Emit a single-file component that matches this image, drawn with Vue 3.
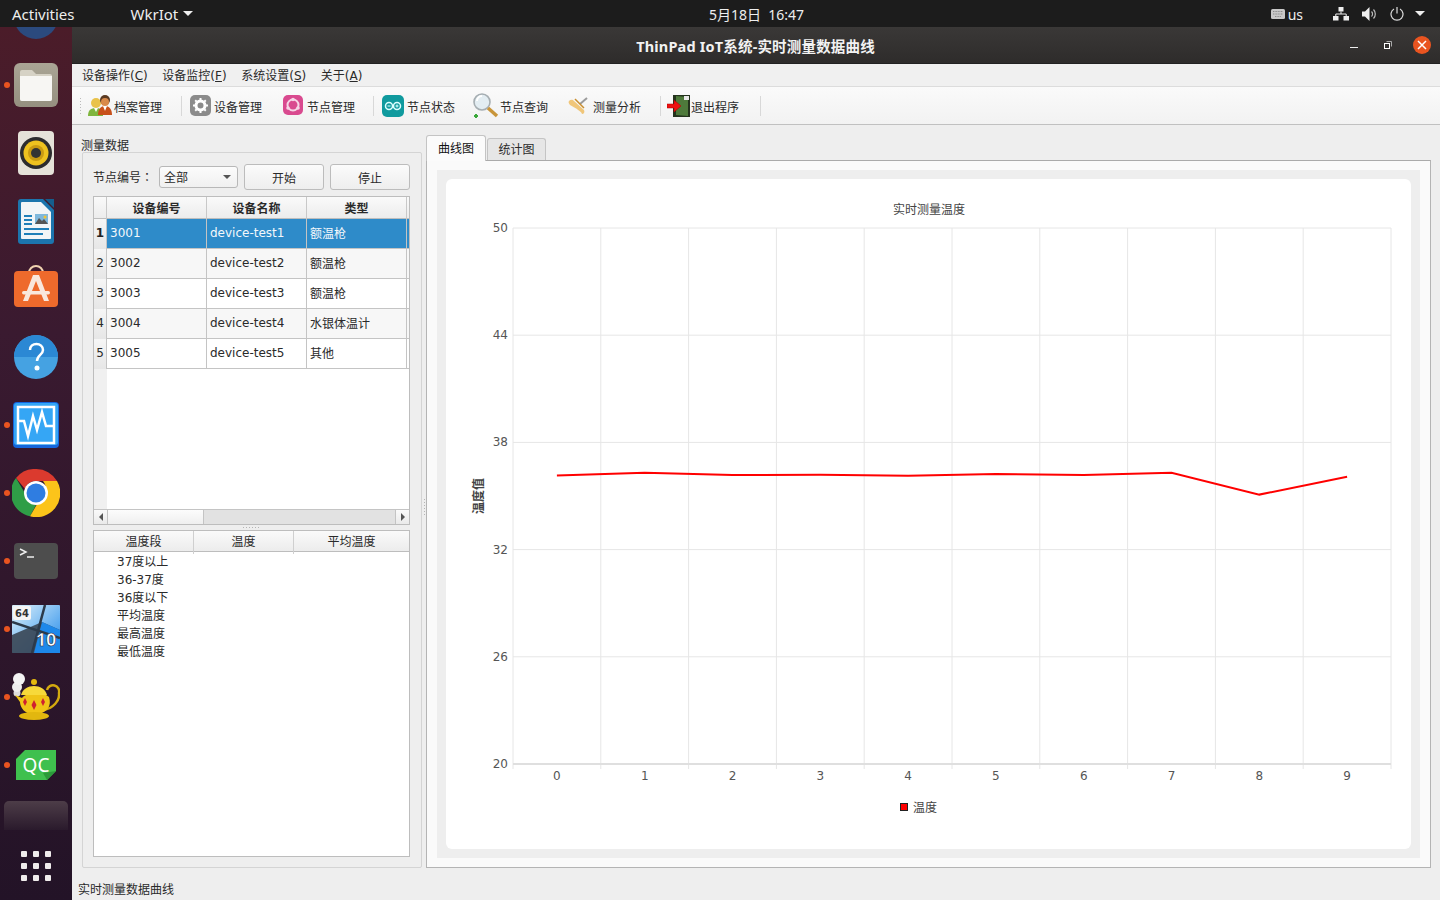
<script setup>
const devices = [
  { id: "3001", name: "device-test1", type: "额温枪" },
  { id: "3002", name: "device-test2", type: "额温枪" },
  { id: "3003", name: "device-test3", type: "额温枪" },
  { id: "3004", name: "device-test4", type: "水银体温计" },
  { id: "3005", name: "device-test5", type: "其他" },
];

const tempRows = ["37度以上", "36-37度", "36度以下", "平均温度", "最高温度", "最低温度"];

const left = 513;
const right = 1391;
const top = 228;
const bottom = 764;
const stepX = (right - left) / 10;
const stepY = (bottom - top) / 5;

const xLines = Array.from({ length: 11 }, (_, i) => left + i * stepX);
const yLines = Array.from({ length: 6 }, (_, i) => top + i * stepY);
const yLabels = ["50", "44", "38", "32", "26", "20"];
const xLabels = Array.from({ length: 10 }, (_, i) => i);

const values = [36.15, 36.3, 36.17, 36.19, 36.13, 36.23, 36.18, 36.3, 35.08, 36.08];
const points = values
  .map((v, i) => {
    const x = left + stepX / 2 + i * stepX;
    const y = bottom - ((v - 20) / 30) * (bottom - top);
    return x.toFixed(1) + "," + y.toFixed(1);
  })
  .join(" ");
</script>

<template>
  <div class="desktop">
    <header class="topbar">
      <span class="activities">Activities</span>
      <span class="app-menu">WkrIot<i class="caret"></i></span>
      <span class="clock">5月18日&nbsp;&nbsp;16:47</span>
      <div class="tray">
        <svg width="14" height="10" viewBox="0 0 14 10">
          <rect width="14" height="10" rx="1.5" fill="#c8c8c8" />
          <path d="M2 2.500h10M2 5h10M4 7.500h6" stroke="#8a8a8a" stroke-width="1" stroke-dasharray="1 .6" />
        </svg>
        <span class="lang">us</span>
        <svg class="net" width="16" height="14" viewBox="0 0 16 14">
          <path d="M5.500 0h5v4.500h-5zM0 9h5.500v4.500H0zM10.500 9H16v4.500h-5.500z" fill="#eee" />
          <path d="M8 4.500v2.500M2.800 9V7h10.400v2" fill="none" stroke="#eee" />
        </svg>
        <svg class="vol" width="15" height="14" viewBox="0 0 15 14">
          <path d="M0 4.500h3L7.500 0v14L3 9.500H0z" fill="#eee" />
          <path d="M9.500 4.500a3.500 3.500 0 0 1 0 5M11.500 2.500a6.500 6.500 0 0 1 0 9" fill="none" stroke="#bbb" stroke-width="1.200" />
        </svg>
        <svg class="pow" width="14" height="14" viewBox="0 0 14 14">
          <path d="M7 0v6.500" stroke="#ddd" stroke-width="1.200" />
          <path d="M4 2A6 6 0 1 0 10 2" fill="none" stroke="#ddd" stroke-width="1.200" />
        </svg>
        <i class="caret tray-caret"></i>
      </div>
    </header>

    <div class="below">
      <aside class="dock">
        <div class="dock-item first">
          <svg width="44" height="44" viewBox="0 0 44 44"><circle cx="22" cy="22" r="22" fill="#2b4a7e" /></svg>
        </div>
        <div class="dock-item running">
          <svg width="44" height="44" viewBox="0 0 44 44">
            <defs>
              <linearGradient id="fileBg" x1="0" y1="0" x2="0" y2="1"><stop offset="0" stop-color="#aaa595" /><stop offset="1" stop-color="#958f7f" /></linearGradient>
            </defs>
            <rect width="44" height="44" rx="6" fill="url(#fileBg)" />
            <path d="M6 9a2 2 0 0 1 2-2h10l4 4h14a2 2 0 0 1 2 2v23a2 2 0 0 1-2 2H8a2 2 0 0 1-2-2z" fill="#d6d2c5" />
            <path d="M6 13h32v23a2 2 0 0 1-2 2H8a2 2 0 0 1-2-2z" fill="#f7f6f3" />
          </svg>
        </div>
        <div class="dock-item">
          <svg width="36" height="44" viewBox="0 0 36 44">
            <rect width="36" height="44" rx="4" fill="#e5e2d9" />
            <circle cx="18" cy="22" r="16" fill="#2c2c2e" />
            <circle cx="18" cy="22" r="12.500" fill="#eec21f" />
            <circle cx="18" cy="22" r="8" fill="#c99a12" />
            <circle cx="18" cy="22" r="5" fill="#333" />
          </svg>
        </div>
        <div class="dock-item">
          <svg width="36" height="45" viewBox="0 0 36 45">
            <path d="M3 0h22l11 11v31a3 3 0 0 1-3 3H3a3 3 0 0 1-3-3V3a3 3 0 0 1 3-3z" fill="#1c75ad" />
            <path d="M4 3h19l10 10v26a1 1 0 0 1-1 1H4a1 1 0 0 1-1-1V4a1 1 0 0 1 1-1z" fill="#f2f5f7" />
            <path d="M27 0h9v9z" fill="#155e8d" />
            <path d="M6 16h8v2H6zM6 20h8v2H6zM6 24h8v2H6zM6 29h25v2H6zM6 34h19v2H6z" fill="#1f7fb9" />
            <rect x="17" y="15" width="13" height="10" fill="#7fb8dc" />
            <path d="M17 25l4-6 3 3 2-2 4 5z" fill="#555" />
            <circle cx="27" cy="18" r="1.500" fill="#f4c430" />
          </svg>
        </div>
        <div class="dock-item">
          <svg width="44" height="48" viewBox="0 0 44 48">
            <path d="M15 8a7 7 0 0 1 14 0" fill="none" stroke="#f0d3b0" stroke-width="2" />
            <rect y="6" width="44" height="36" rx="4" fill="#ee6a2c" />
            <path d="M19 10h6l10 26h-5l-8-20-8 20H9z" fill="#f9e7dc" />
            <rect x="8" y="26" width="28" height="3.500" rx="1.700" fill="#f9e7dc" />
          </svg>
        </div>
        <div class="dock-item">
          <svg width="44" height="44" viewBox="0 0 44 44">
            <circle cx="22" cy="22" r="22" fill="#45a2e2" />
            <path d="M0 22a22 22 0 0 1 44 0z" fill="#2b88d4" />
            <path d="M16 15c0-4 3-6 6.500-6s6.500 2.500 6.500 6c0 5-6 5-6 11" fill="none" stroke="#fff" stroke-width="2.500" />
            <circle cx="23" cy="33" r="2.500" fill="#fff" />
          </svg>
        </div>
        <div class="dock-item running">
          <svg width="46" height="46" viewBox="0 0 46 46">
            <rect width="46" height="46" rx="4" fill="#1466dc" />
            <rect x="1" y="1" width="44" height="42" rx="3" fill="#35a6f5" />
            <rect x="5" y="5" width="36" height="36" fill="none" stroke="#fff" stroke-width="2.500" />
            <path d="M6 19h5l4 15 5-20 4 14 5-18 4 14h9" fill="none" stroke="#fff" stroke-width="2.500" />
          </svg>
        </div>
        <div class="dock-item running">
          <svg width="48" height="48" viewBox="0 0 48 48">
            <path d="M24 0a24 24 0 0 1 21 12H24a12 12 0 0 0-11 8L4 9A24 24 0 0 1 24 0z" fill="#db3a2e" />
            <path d="M4 9l10 17a12 12 0 0 0 10 10l-6 11.300A24 24 0 0 1 4 9z" fill="#2f9e47" />
            <path d="M45 12a24 24 0 0 1-27 35.300L28 30a12 12 0 0 0 3-18z" fill="#fcc41a" />
            <circle cx="24" cy="24" r="12" fill="#fff" />
            <circle cx="24" cy="24" r="9.500" fill="#2f7de1" />
          </svg>
        </div>
        <div class="dock-item running">
          <svg width="44" height="36" viewBox="0 0 44 36">
            <rect width="44" height="36" rx="4" fill="#4d4d4d" />
            <path d="M6 6l6 3-6 3" fill="none" stroke="#eee" stroke-width="1.500" />
            <path d="M13 14h7" stroke="#eee" stroke-width="1.500" />
          </svg>
        </div>
        <div class="dock-item running">
          <svg width="48" height="48" viewBox="0 0 48 48">
            <defs>
              <linearGradient id="win" x1="0" y1="0" x2="1" y2="1"><stop offset="0" stop-color="#e0f2fb" /><stop offset="1" stop-color="#1d88ea" /></linearGradient>
            </defs>
            <rect width="48" height="48" rx="1" fill="url(#win)" />
            <path d="M0 30l30-13 18 8v23H0z" fill="#3a4654" opacity=".9" />
            <path d="M30 17l18 8v23H22z" fill="#1d88ea" />
            <path d="M33 0L20 48M0 17l48 16" stroke="#2c3a4a" stroke-width="2.500" />
            <rect x="1" y="1" width="18" height="14" rx="2" fill="#f5f5f5" />
            <text x="10" y="12" class="dock-64">64</text>
            <text x="34" y="41" class="dock-10">10</text>
          </svg>
        </div>
        <div class="dock-item running">
          <svg width="48" height="48" viewBox="0 0 48 48">
            <circle cx="5" cy="20" r="3.500" fill="#ddd" /><circle cx="5" cy="14" r="5" fill="#eee" /><circle cx="7" cy="6" r="6" fill="#f4f4f4" />
            <path d="M35 17a6 6 0 0 1 12 3c1 8-6 15-15 17" fill="none" stroke="#d3a90f" stroke-width="2.500" />
            <path d="M3 22l7 3c5-6 21-6 27-1 3 9-2 15-10 17H18C11 39 8 33 8 29z" fill="#f0c417" />
            <circle cx="22" cy="9" r="3" fill="#e5b90e" />
            <path d="M9 22c3-12 23-12 26 0z" fill="#f7d93a" />
            <ellipse cx="22" cy="43" rx="15" ry="4" fill="#e2b70f" />
            <path d="M13 25l2 4-2 4-2-4zM22 27l2.500 5-2.500 5-2.500-5zM31 25l2 4-2 4-2-4z" fill="#cf2030" />
          </svg>
        </div>
        <div class="dock-item running">
          <svg width="40" height="30" viewBox="0 0 40 30">
            <path d="M9 0h31v21l-9 9H0V9z" fill="#3fc04e" />
            <path d="M31 30l9-9-13 2z" fill="#2b9a3a" />
            <text x="20" y="22" class="dock-qc">QC</text>
          </svg>
        </div>
        <div class="dock-fade"></div>
        <div class="dock-grid">
          <i v-for="n in 9" :key="n"></i>
        </div>
      </aside>

      <main class="window">
        <div class="titlebar">
          <span class="title">ThinPad IoT系统-实时测量数据曲线</span>
          <div class="win-btns">
            <i class="win-min"></i>
            <svg class="win-restore" width="8" height="8" viewBox="0 0 8 8">
              <path d="M2.500 .5h5v5" fill="none" stroke="#aaa" />
              <rect x=".5" y="2.500" width="5" height="5" fill="none" stroke="#fff" />
            </svg>
            <span class="win-close">
              <svg width="10" height="10" viewBox="0 0 10 10"><path d="M1 1l8 8M9 1l-8 8" stroke="#fff" stroke-width="1.500" /></svg>
            </span>
          </div>
        </div>

        <nav class="menubar">
          <span>设备操作(<u>C</u>)</span>
          <span>设备监控(<u>F</u>)</span>
          <span>系统设置(<u>S</u>)</span>
          <span>关于(<u>A</u>)</span>
        </nav>

        <div class="toolbar">
          <i class="handle"></i>
          <div class="tool">
            <svg width="26" height="24" viewBox="0 0 26 24">
              <circle cx="8" cy="9" r="5" fill="#e9c24a" />
              <path d="M0 22c0-6 3-8 8-8s7 2 7 8z" fill="#7fb53d" />
              <path d="M6 14l2 4 2-4z" fill="#fff" />
              <circle cx="17" cy="6" r="5" fill="#5a3a22" />
              <circle cx="17" cy="8" r="4" fill="#d98a4a" />
              <path d="M10 21c0-6 3-9 7-9s7 3 7 9z" fill="#c8511b" />
              <path d="M15 12l2 5 2-5z" fill="#fff" />
            </svg>
            <span>档案管理</span>
          </div>
          <i class="sep"></i>
          <div class="tool">
            <svg width="24" height="24" viewBox="0 0 24 24">
              <rect y="1" width="21" height="21" rx="5" fill="#8b8b8b" />
              <circle cx="10.500" cy="11.500" r="4.500" fill="none" stroke="#fff" stroke-width="3" />
              <path d="M10.500 4v15M3 11.500h15M5.200 6.200l10.600 10.600M15.800 6.200L5.200 16.800" stroke="#fff" stroke-width="2" stroke-dasharray="2 11" />
            </svg>
            <span>设备管理</span>
          </div>
          <div class="tool gap3">
            <svg width="24" height="24" viewBox="0 0 24 24">
              <rect y="1" width="20" height="20" rx="5" fill="#d94a8f" />
              <circle cx="10" cy="11" r="5.500" fill="none" stroke="#f6d5e6" stroke-width="2" />
              <circle cx="10" cy="5.500" r="1.800" fill="#f6d5e6" /><circle cx="5" cy="14" r="1.800" fill="#f6d5e6" /><circle cx="15" cy="14" r="1.800" fill="#f6d5e6" />
            </svg>
            <span>节点管理</span>
          </div>
          <i class="sep sep-tight"></i>
          <div class="tool">
            <svg width="25" height="24" viewBox="0 0 25 24">
              <rect y="1" width="22" height="22" rx="5" fill="#109a9e" />
              <circle cx="7" cy="12" r="3.500" fill="none" stroke="#dff" stroke-width="1.500" />
              <circle cx="15" cy="12" r="3.500" fill="none" stroke="#dff" stroke-width="1.500" />
              <path d="M5.500 12h3M13.500 12h3M15 10.500v3" stroke="#dff" />
            </svg>
            <span>节点状态</span>
          </div>
          <div class="tool">
            <svg width="27" height="26" viewBox="0 0 27 26">
              <circle cx="9" cy="9" r="8" fill="#e3edf2" stroke="#a6aeb2" stroke-width="1.600" />
              <path d="M4 8a5 5 0 0 1 5-5" fill="none" stroke="#fff" stroke-width="2" />
              <path d="M15 15l9 8" stroke="#c8953a" stroke-width="3.400" />
              <path d="M3 21v4M1 23h4" stroke="#3aa83a" stroke-width="2" />
            </svg>
            <span>节点查询</span>
          </div>
          <div class="tool gap2">
            <svg width="25" height="20" viewBox="0 0 25 20">
              <path d="M1 5c2-2 4-1 5 0l10 9c1 2 0 4-2 4-1-3-3-3-5-5L2 9C1 8 0 6 1 5z" fill="#f0c67a" />
              <path d="M12 8l7-6" stroke="#9b9b9b" stroke-width="2" />
              <path d="M7 3l9 9" stroke="#c98e2e" stroke-width="1.500" />
            </svg>
            <span>测量分析</span>
          </div>
          <i class="sep"></i>
          <div class="tool exit">
            <svg width="24" height="24" viewBox="0 0 24 24">
              <rect x="6" y="1" width="17" height="22" fill="#24331e" />
              <path d="M9 2l12 1v19l-12-1z" fill="#4e7a3b" />
              <path d="M17 2h5v4h-5z" fill="#e8e8e8" />
              <path d="M0 10h7V6l7 6-7 6v-4H0z" fill="#ee1111" stroke="#a00" stroke-width=".5" />
            </svg>
            <span>退出程序</span>
          </div>
          <i class="sep last"></i>
        </div>

        <div class="content">
          <section class="data-panel">
            <div class="group-title">测量数据</div>
            <div class="group-box">
              <div class="controls">
                <span class="node-label">节点编号：</span>
                <div class="combo">全部<i class="combo-caret"></i></div>
                <button type="button" class="btn">开始</button>
                <button type="button" class="btn">停止</button>
              </div>

              <div class="device-table">
                <div class="tr head">
                  <span class="corner"></span>
                  <span>设备编号</span>
                  <span>设备名称</span>
                  <span>类型</span>
                </div>
                <div
                  v-for="(d, i) in devices"
                  :key="d.id"
                  class="tr row"
                  :class="{ selected: i === 0, alt: i % 2 === 1 }"
                >
                  <span class="num">{{ i + 1 }}</span>
                  <span>{{ d.id }}</span>
                  <span>{{ d.name }}</span>
                  <span class="cjk">{{ d.type }}</span>
                  <span class="rest"></span>
                </div>
                <div class="blank"><i></i></div>
                <div class="hscroll">
                  <span class="arrow"><i class="tri-left"></i></span>
                  <span class="thumb"></span>
                  <span class="track"></span>
                  <span class="arrow end"><i class="tri-right"></i></span>
                </div>
              </div>

              <div class="splitter"><i></i></div>

              <div class="temp-table">
                <div class="temp-head">
                  <span>温度段</span>
                  <span>温度</span>
                  <span>平均温度</span>
                </div>
                <div v-for="r in tempRows" :key="r" class="temp-row">{{ r }}</div>
              </div>
            </div>
          </section>

          <div class="vsplit"><i></i></div>

          <section class="tabs">
            <div class="tab-bar">
              <span class="tab active">曲线图</span>
              <span class="tab">统计图</span>
            </div>
            <div class="tab-pane">
              <div class="chart-wrap">
                <div class="chart-card">
                  <svg class="chart" viewBox="446 179 965 670" width="965" height="670">
                    <text x="929" y="214" text-anchor="middle" class="chart-title">实时测量温度</text>
                    <line v-for="y in yLines" :key="'h' + y" :x1="left" :x2="right" :y1="y" :y2="y" class="grid" />
                    <line v-for="x in xLines" :key="'v' + x" :x1="x" :x2="x" :y1="top" :y2="bottom + 5" class="grid" />
                    <line :x1="left" :x2="right" :y1="bottom" :y2="bottom" class="axis" />
                    <text v-for="(l, i) in yLabels" :key="l" x="508" :y="yLines[i] + 4" text-anchor="end" class="tick">{{ l }}</text>
                    <text v-for="l in xLabels" :key="'x' + l" :x="left + stepX / 2 + l * stepX" y="780" text-anchor="middle" class="tick">{{ l }}</text>
                    <text x="0" y="0" transform="translate(483 496) rotate(-90)" text-anchor="middle" class="axis-title">温度值</text>
                    <polyline :points="points" class="curve" />
                    <rect x="900.500" y="803.500" width="7" height="7" class="legend-box" />
                    <text x="913" y="812" class="legend">温度</text>
                  </svg>
                </div>
              </div>
            </div>
          </section>
        </div>

        <footer class="statusbar">实时测量数据曲线</footer>
      </main>
    </div>
  </div>
</template>

<style>
html,
body {
  margin: 0;
  overflow: hidden;
  background: #eeeeee;
}
</style>

<style scoped>
.desktop {
  width: 1440px;
  height: 900px;
  display: flex;
  flex-direction: column;
  font-family: "DejaVu Sans", "Noto Sans CJK SC", sans-serif;
  font-size: 12px;
  color: #2a2a2a;
  overflow: hidden;
}

.topbar {
  height: 27px;
  flex: none;
  background: #1c1c1c;
  color: #eeeeee;
  display: flex;
  align-items: center;
  font-family: "Noto Sans", "Noto Sans CJK SC", sans-serif;
  font-size: 15px;
  position: relative;
}

.activities {
  margin-left: 12px;
}

.app-menu {
  margin-left: 56px;
  display: flex;
  align-items: center;
}

.caret {
  display: block;
  width: 0;
  height: 0;
  margin-left: 5px;
  border-left: 5px solid transparent;
  border-right: 5px solid transparent;
  border-top: 5px solid #eeeeee;
}

.clock {
  position: absolute;
  left: 709px;
  font-size: 14px;
}

.tray {
  margin-left: auto;
  display: flex;
  align-items: center;
  padding-right: 15px;
}

.lang {
  margin: 1px 0 0 3px;
  font-size: 14px;
}

.net {
  margin-left: 30px;
}

.vol {
  margin-left: 13px;
}

.pow {
  margin-left: 13px;
}

.tray-caret {
  margin-left: 11px;
}

.below {
  flex: 1;
  display: flex;
  min-height: 0;
}

.dock {
  width: 72px;
  flex: none;
  background: linear-gradient(180deg, #4b1c29 0%, #3a1a30 35%, #231327 100%);
  display: flex;
  flex-direction: column;
  align-items: center;
  overflow: hidden;
}

.dock-item {
  height: 68px;
  flex: none;
  display: flex;
  align-items: center;
  justify-content: center;
  position: relative;
  width: 100%;
}

.dock-item.first {
  margin-top: -44px;
}

.dock-item.running::before {
  content: "";
  position: absolute;
  left: 4px;
  top: 31px;
  width: 6px;
  height: 6px;
  border-radius: 50%;
  background: #e95420;
}

.dock-64 {
  font: bold 10px "DejaVu Sans", sans-serif;
  fill: #333;
  text-anchor: middle;
}

.dock-10 {
  font: bold 18px "Noto Sans", sans-serif;
  fill: #fff;
  stroke: #1b2b44;
  stroke-width: 0.6px;
  text-anchor: middle;
}

.dock-qc {
  font: 19px "Noto Sans", sans-serif;
  fill: #fff;
  text-anchor: middle;
}

.dock-fade {
  width: 64px;
  height: 29px;
  margin-top: 2px;
  flex: none;
  border-radius: 5px 5px 0 0;
  background: linear-gradient(180deg, #4d3d48, #2a1a2c);
}

.dock-grid {
  margin-top: 21px;
  display: grid;
  grid-template-columns: repeat(3, 6px);
  gap: 6px;
}

.dock-grid i {
  display: block;
  width: 6px;
  height: 6px;
  border-radius: 1px;
  background: #f0ecec;
}

.window {
  flex: 1;
  min-width: 0;
  display: flex;
  flex-direction: column;
  background: #eeeeee;
}

.titlebar {
  height: 37px;
  flex: none;
  background: linear-gradient(180deg, #3a3837, #2e2c2b);
  display: flex;
  align-items: center;
  justify-content: center;
  position: relative;
  border-bottom: 1px solid #222;
  box-sizing: border-box;
}

.title {
  font-family: "Noto Sans", "Noto Sans CJK SC", sans-serif;
  font-weight: 700;
  font-size: 14.5px;
  letter-spacing: 0.17px;
  color: #f2f2f2;
  margin-left: -1px;
}

.win-btns {
  position: absolute;
  right: 9px;
  top: 9px;
  display: flex;
  align-items: center;
}

.win-min {
  display: block;
  width: 8px;
  height: 1px;
  margin-top: 5px;
  background: #eeeeee;
}

.win-restore {
  margin-left: 26px;
}

.win-close {
  margin-left: 21px;
  width: 18px;
  height: 18px;
  border-radius: 50%;
  background: #e95420;
  display: flex;
  align-items: center;
  justify-content: center;
}

.menubar {
  height: 23px;
  flex: none;
  display: flex;
  align-items: center;
  gap: 14.6px;
  padding: 0 0 2px 10px;
  background: #f0f0f0;
  border-bottom: 1px solid #dcdcdc;
  box-sizing: border-box;
}

.toolbar {
  height: 38px;
  flex: none;
  display: flex;
  align-items: center;
  background: linear-gradient(180deg, #fafafa, #f2f2f2);
  border-bottom: 1px solid #c0c0c0;
  box-sizing: border-box;
  padding-left: 7px;
}

.handle {
  width: 3px;
  height: 18px;
  margin-right: -2px;
  background-image: radial-gradient(#bbbbbb 0.6px, transparent 0.8px);
  background-size: 3px 3px;
}

.tool {
  display: flex;
  align-items: center;
  padding: 0 10px 0 8px;
  white-space: nowrap;
}

.tool svg {
  flex: none;
}

.tool span {
  margin-top: 2px;
}

.tool.gap3 {
  margin-left: 3px;
}

.tool.gap2 {
  margin-left: 2px;
}

.tool.exit {
  margin-left: -2px;
}

.sep {
  display: block;
  width: 1px;
  height: 20px;
  background: #d8d8d8;
  margin: 0 0 0 9px;
}

.sep.sep-tight {
  margin-left: 8px;
}

.sep.last {
  margin-left: 11px;
}

.content {
  flex: 1;
  min-height: 0;
  display: flex;
  padding: 10px 9px 10px 9px;
}

.data-panel {
  width: 341px;
  flex: none;
  display: flex;
  flex-direction: column;
}

.group-title {
  height: 17px;
  line-height: 22px;
  flex: none;
}

.group-box {
  flex: 1;
  min-height: 0;
  margin-left: 1px;
  border: 1px solid #d4d4d4;
  border-radius: 2px;
  padding: 11px 11px 10px 10px;
  display: flex;
  flex-direction: column;
}

.controls {
  height: 26px;
  flex: none;
  display: flex;
  align-items: center;
}

.node-label {
  width: 66px;
  flex: none;
  font-family: "DejaVu Sans", "Noto Sans CJK TC", sans-serif;
  margin-top: -1px;
}

.combo {
  width: 79px;
  height: 22px;
  box-sizing: border-box;
  border: 1px solid #b8b8b8;
  border-radius: 3px;
  background: linear-gradient(180deg, #fcfcfc, #f0f0f0);
  padding: 0 0 1px 4px;
  display: flex;
  align-items: center;
  justify-content: space-between;
}

.combo-caret {
  width: 0;
  height: 0;
  margin-right: 6px;
  border-left: 4px solid transparent;
  border-right: 4px solid transparent;
  border-top: 4px solid #555;
}

.btn {
  width: 80px;
  height: 26px;
  margin-left: 6px;
  padding: 0;
  font: inherit;
  color: inherit;
  border: 1px solid #bcbcbc;
  border-radius: 3px;
  background: linear-gradient(180deg, #fbfbfb, #eeeeee);
}

.device-table {
  margin-top: 6px;
  height: 329px;
  flex: none;
  box-sizing: border-box;
  border: 1px solid #bdbdbd;
  display: flex;
  flex-direction: column;
  background: #fff;
}

.tr {
  display: grid;
  grid-template-columns: 13px 100px 100px 100px 1fr;
  flex: none;
}

.head {
  height: 22px;
  box-sizing: border-box;
  border-bottom: 1px solid #bdbdbd;
  background: linear-gradient(180deg, #fafafa, #ececec);
  font-weight: 700;
  line-height: 25px;
  text-align: center;
}

.head span {
  border-right: 1px solid #c8c8c8;
}

.row {
  height: 30px;
  line-height: 28px;
  box-sizing: border-box;
  border-bottom: 1px solid #c4c4c4;
}

.row span {
  border-right: 1px solid #c4c4c4;
  padding-left: 3px;
  white-space: nowrap;
}

.row .cjk {
  line-height: 30px;
}

.row .rest {
  border-right: none;
  padding: 0;
}

.row .num {
  padding: 0;
  text-align: center;
  background: linear-gradient(180deg, #f6f6f6, #e6e6e6);
}

.row.alt {
  background: #f7f7f7;
}

.row.selected {
  background: #2e8bc9;
  color: #f4f8fb;
}

.row.selected .num {
  color: #222;
  font-weight: 700;
}

.blank {
  flex: 1;
  min-height: 0;
}

.blank i {
  display: block;
  width: 13px;
  height: 100%;
  background: #f0f0f0;
}

.hscroll {
  height: 14px;
  flex: none;
  display: flex;
  border-top: 1px solid #c4c4c4;
  background: #e2e2e2;
}

.arrow {
  width: 13px;
  flex: none;
  display: flex;
  align-items: center;
  justify-content: center;
  background: linear-gradient(180deg, #fafafa, #eaeaea);
  border-right: 1px solid #c4c4c4;
}

.arrow.end {
  border-right: none;
  border-left: 1px solid #c4c4c4;
}

.tri-left,
.tri-right {
  width: 0;
  height: 0;
  border-top: 4px solid transparent;
  border-bottom: 4px solid transparent;
}

.tri-left {
  border-right: 4px solid #555;
}

.tri-right {
  border-left: 4px solid #555;
}

.thumb {
  width: 95px;
  flex: none;
  background: linear-gradient(180deg, #fcfcfc, #efefef);
  border-right: 1px solid #c4c4c4;
}

.track {
  flex: 1;
}

.splitter {
  height: 5px;
  flex: none;
  display: flex;
  align-items: center;
  justify-content: center;
}

.splitter i {
  display: block;
  width: 18px;
  height: 1px;
  background-image: linear-gradient(90deg, #b5b5b5 1px, transparent 1px);
  background-size: 3px 1px;
}

.temp-table {
  flex: 1;
  min-height: 0;
  box-sizing: border-box;
  border: 1px solid #bdbdbd;
  background: #fff;
}

.temp-head {
  height: 21px;
  box-sizing: border-box;
  display: grid;
  grid-template-columns: 100px 100px 1fr;
  border-bottom: 1px solid #bdbdbd;
  background: linear-gradient(180deg, #fafafa, #ececec);
  line-height: 23px;
  text-align: center;
}

.temp-head span {
  border-right: 1px solid #cfcfcf;
}

.temp-head span:last-child {
  border-right: none;
}

.temp-row {
  height: 18px;
  line-height: 20px;
  padding-left: 23px;
}

.vsplit {
  width: 4px;
  flex: none;
  display: flex;
  align-items: center;
  justify-content: center;
}

.vsplit i {
  display: block;
  width: 1px;
  height: 18px;
  margin-top: 12px;
  background-image: linear-gradient(180deg, #b5b5b5 1px, transparent 1px);
  background-size: 1px 3px;
}

.tabs {
  flex: 1;
  min-width: 0;
  display: flex;
  flex-direction: column;
}

.tab-bar {
  height: 25px;
  flex: none;
  display: flex;
  align-items: flex-end;
  position: relative;
  z-index: 1;
}

.tab {
  width: 59px;
  height: 22px;
  box-sizing: border-box;
  border: 1px solid #c4c4c4;
  border-bottom: none;
  border-radius: 3px 3px 0 0;
  background: #e6e6e6;
  text-align: center;
  line-height: 23px;
  margin-left: 1px;
}

.tab.active {
  width: 60px;
  height: 26px;
  margin: 0 0 -1px;
  background: #fbfbfb;
  line-height: 27px;
  color: #111;
}

.tab-pane {
  flex: 1;
  min-height: 0;
  box-sizing: border-box;
  background: #fafafa;
  border: 1px solid #b4b4b4;
  border-top-color: #aaa;
  padding: 9px 10px 9px 10px;
}

.chart-wrap {
  height: 100%;
  box-sizing: border-box;
  background: #eeeeee;
  padding: 9px;
}

.chart-card {
  height: 100%;
  background: #fff;
  border-radius: 6px;
  overflow: hidden;
}

.chart {
  display: block;
}

.chart text {
  font-family: "DejaVu Sans", "Noto Sans CJK SC", sans-serif;
}

.chart-title,
.legend {
  font-size: 12px;
  fill: #444;
}

.grid {
  stroke: #e6e6e6;
  stroke-width: 1;
}

.axis {
  stroke: #dfdfdf;
  stroke-width: 2;
}

.tick {
  font-size: 12px;
  fill: #555;
}

.axis-title {
  font-size: 12px;
  font-weight: 700;
  fill: #444;
}

.curve {
  fill: none;
  stroke: #ff0000;
  stroke-width: 2;
}

.legend-box {
  fill: #ff0000;
  stroke: #222;
  stroke-width: 1;
}

.statusbar {
  height: 22px;
  flex: none;
  line-height: 24px;
  padding-left: 6px;
  box-sizing: border-box;
}
</style>
